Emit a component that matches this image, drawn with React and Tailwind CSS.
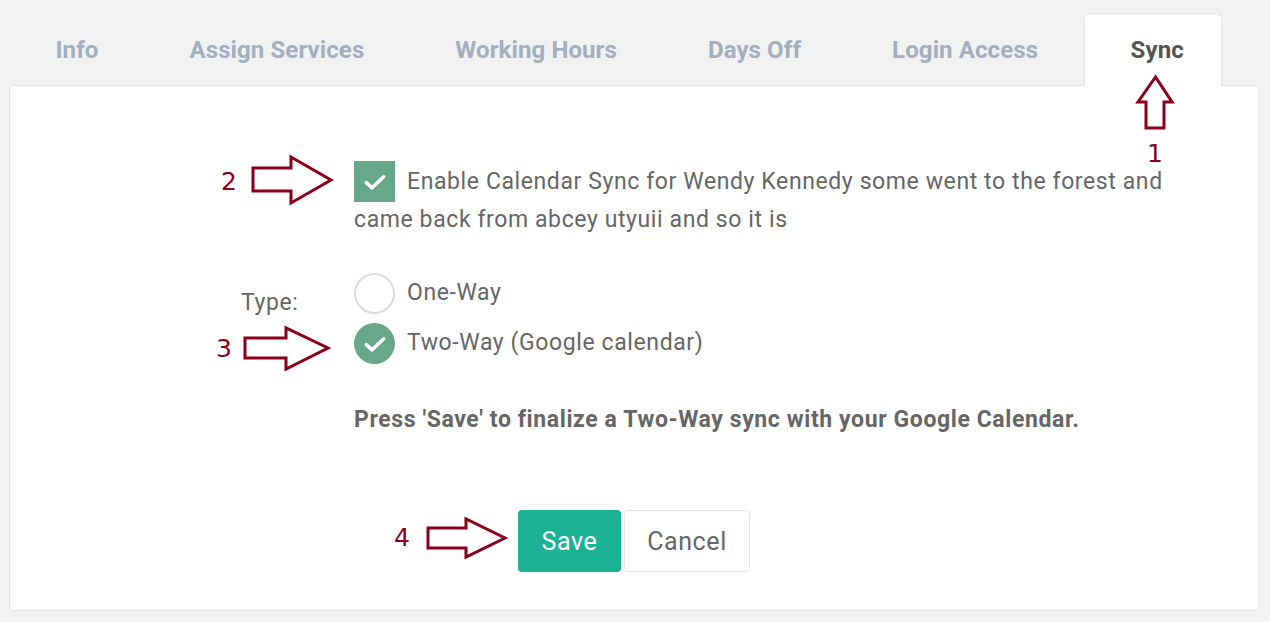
import React from "react";

const tabs = ["Info", "Assign Services", "Working Hours", "Days Off", "Login Access"];

function Check({ size = 20 }) {
  return (
    <svg width={size} height={size} viewBox="0 0 24 24" fill="none">
      <path d="M4.5 12.5 L9.5 17 L19.5 7.5" stroke="white" strokeWidth="3" strokeLinecap="round" strokeLinejoin="round" />
    </svg>
  );
}

export default function App() {
  const red = "#8b0018";
  return (
    <div className="relative w-[1270px] h-[622px] overflow-hidden bg-[#f2f2f2]" style={{ fontFamily: "Roboto, 'Noto Sans', sans-serif" }}>
      {/* tabs */}
      <div className="relative z-10 flex items-end h-[86px] pl-[10px] pt-[13px]">
        {tabs.map((t) => (
          <div key={t} className="h-[73px] px-[45.5px] flex items-center text-[24px] tracking-[0.1px] font-bold text-[#a3aec0]">
            {t}
          </div>
        ))}
        <div className="h-[73px] pl-[46px] pr-[37px] flex items-center text-[24px] tracking-[0.1px] font-bold text-[#555] bg-white border border-b-0 border-[#e6e6e6] rounded-t-[6px]">
          Sync
        </div>
      </div>
      {/* panel */}
      <div className="ml-[9px] w-[1250px] -mt-px h-[526px] bg-white border border-[#e6e6e6] rounded-[3px] text-[#666]">
        <div className="ml-[344px] w-[840px] pt-[77px]">
          <div className="text-[23px] tracking-[0.6px] leading-[38px]">
            <span className="relative top-[1px] inline-flex align-middle items-center justify-center w-[41px] h-[41px] bg-[#67a78c] mr-[12px] -mt-[4px]">
              <Check size={28} />
            </span>
            Enable Calendar Sync for Wendy Kennedy some went to the forest and came back from abcey utyuii and so it is
          </div>
          <div className="relative mt-[34px] flex flex-col gap-[9px] text-[23px] tracking-[0.6px]">
            <div className="absolute -left-[113px] top-[13px]">Type:</div>
            <div className="flex items-center gap-[12px]">
              <span className="w-[41px] h-[41px] rounded-full border-2 border-[#dcdcdc] bg-white" />
              <span className="-mt-[2px]">One-Way</span>
            </div>
            <div className="flex items-center gap-[12px]">
              <span className="w-[41px] h-[41px] rounded-full bg-[#67a78c] flex items-center justify-center">
                <Check size={28} />
              </span>
              <span className="-mt-[2px]">Two-Way (Google calendar)</span>
            </div>
          </div>
          <div className="mt-[41px] text-[23px] tracking-[0.6px] font-bold leading-[30px]">
            Press 'Save' to finalize a Two-Way sync with your Google Calendar.
          </div>
          <div className="mt-[75px] ml-[164px] flex gap-[3px]">
            <button className="w-[103px] h-[62px] rounded-[4px] bg-[#1bb394] text-white text-[25px] tracking-[0.6px]">Save</button>
            <button className="w-[126px] h-[62px] rounded-[4px] bg-white border border-[#e6e6e6] text-[#666] text-[25px] tracking-[0.6px]">Cancel</button>
          </div>
        </div>
      </div>
      {/* annotations */}
      <svg className="absolute left-0 top-0 z-20 pointer-events-none" width="1270" height="622" viewBox="0 0 1270 622">
        <g fill="none" stroke={red} strokeWidth="3" strokeLinejoin="miter">
          <polygon points="1155.5,77 1138,102 1146,102 1146,128 1164,128 1164,102 1172,102" />
          <polygon points="253,168 291,168 291,157 331,180 291,203 291,191 253,191" />
          <polygon points="245,338 286,338 286,328 328,348 286,369 286,358 245,358" />
          <polygon points="428,528 466,528 466,519 505,538 466,557 466,548 428,548" />
        </g>
        <g fill={red} fontFamily="'DejaVu Sans', sans-serif" fontSize="25">
          <text x="1147" y="162">1</text>
          <text x="221" y="190">2</text>
          <text x="216" y="357">3</text>
          <text x="394" y="546">4</text>
        </g>
      </svg>
    </div>
  );
}
